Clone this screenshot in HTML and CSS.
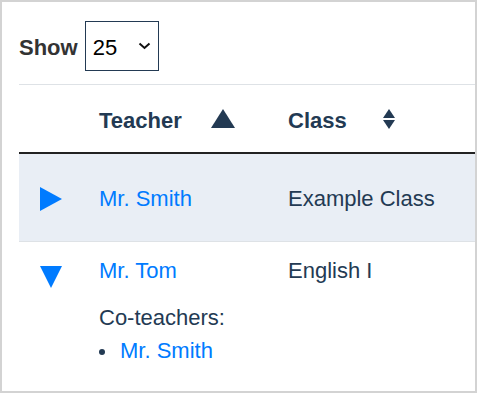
FILE: index.html
```html
<!DOCTYPE html>
<html lang="en">
<head>
<meta charset="utf-8">
<title>Teachers</title>
<link rel="stylesheet" href="styles.css">
</head>
<body>
<div class="frame">
  <div class="toolbar">
    <span class="show-label">Show</span>
    <div class="page-size">
      <span class="page-size-value">25</span>
      <svg class="chevron" width="13" height="8" viewBox="0 0 13 8"><polyline points="1.5,1.5 6.5,6 11.5,1.5" fill="none" stroke="#111" stroke-width="2"/></svg>
    </div>
  </div>
  <div class="table">
    <div class="row head">
      <div class="cell"></div>
      <div class="cell th"><span class="th-label">Teacher</span>
        <svg class="sort-asc" width="24" height="19" viewBox="0 0 24 19"><polygon points="12,0 24,19 0,19" fill="#233a53"/></svg>
      </div>
      <div class="cell th"><span class="th-label">Class</span>
        <svg class="sort-both" width="12" height="20" viewBox="0 0 12 20"><polygon points="6,0 12,9 0,9" fill="#233a53"/><polygon points="0,11 12,11 6,20" fill="#233a53"/></svg>
      </div>
    </div>
    <div class="row row-collapsed">
      <div class="cell"><svg class="toggle" width="22" height="24" viewBox="0 0 22 24"><polygon points="0,0 22,12 0,24" fill="#007bff"/></svg></div>
      <div class="cell"><a class="link" href="#">Mr. Smith</a></div>
      <div class="cell">Example Class</div>
    </div>
    <div class="row row-expanded">
      <div class="cell"><svg class="toggle toggle-down" width="22" height="22" viewBox="0 0 22 22"><polygon points="0,0 22,0 11,22" fill="#007bff"/></svg></div>
      <div class="cell">
        <a class="link" href="#">Mr. Tom</a>
        <div class="details">
          <div>Co-teachers:</div>
          <ul class="co-list">
            <li><a class="link" href="#">Mr. Smith</a></li>
          </ul>
        </div>
      </div>
      <div class="cell">English I</div>
    </div>
  </div>
</div>
</body>
</html>
```
FILE: styles.css
```css
* { box-sizing: border-box; }
html, body { margin: 0; padding: 0; background: #fff; }
body {
  font-family: "Liberation Sans", Arial, sans-serif;
  font-size: 22px;
  line-height: 1.5;
  color: #233a53;
}
.frame {
  width: 477px;
  height: 393px;
  border: 2px solid #d3d3d3;
  padding-left: 17px;
  overflow: hidden;
}
.toolbar {
  display: flex;
  align-items: center;
  gap: 7px;
  padding-top: 19px;
  margin-bottom: 13px;
}
.show-label {
  font-weight: bold;
  color: #333;
  padding-top: 2px;
}
.page-size {
  width: 74px;
  height: 50px;
  border: 1px solid #233a53;
  display: flex;
  align-items: center;
  justify-content: space-between;
  padding: 2px 7px 0 7px;
  color: #000;
}
.chevron { margin-top: -2px; }
.table { width: 456px; }
.row {
  display: grid;
  grid-template-columns: 80px 189px 1fr;
}
.cell { white-space: nowrap; }
.head {
  border-top: 1px solid #dee2e6;
  border-bottom: 2px solid #222;
  height: 70px;
  align-items: center;
}
.th {
  display: flex;
  align-items: center;
  font-weight: bold;
}
.th-label { padding-top: 3px; }
.sort-asc { margin-left: 29px; }
.sort-both { margin-left: 36px; }
.row-collapsed {
  background: #e9eef5;
  height: 88px;
  border-bottom: 1px solid #dee2e6;
  align-items: center;
  padding-top: 2px;
}
.toggle { display: block; margin-left: 21px; }
.row-expanded {
  align-items: start;
  padding-top: 12px;
}
.toggle-down { margin-top: 12px; }
.link { color: #007bff; text-decoration: none; }
.details { margin-top: 14px; }
.co-list {
  list-style: none;
  margin: 0;
  padding: 0;
}
.co-list li {
  display: flex;
  align-items: center;
  gap: 15px;
}
.co-list li::before {
  content: "";
  width: 6px;
  height: 6px;
  border-radius: 50%;
  background: #233a53;
  margin-top: 3px;
}
```
